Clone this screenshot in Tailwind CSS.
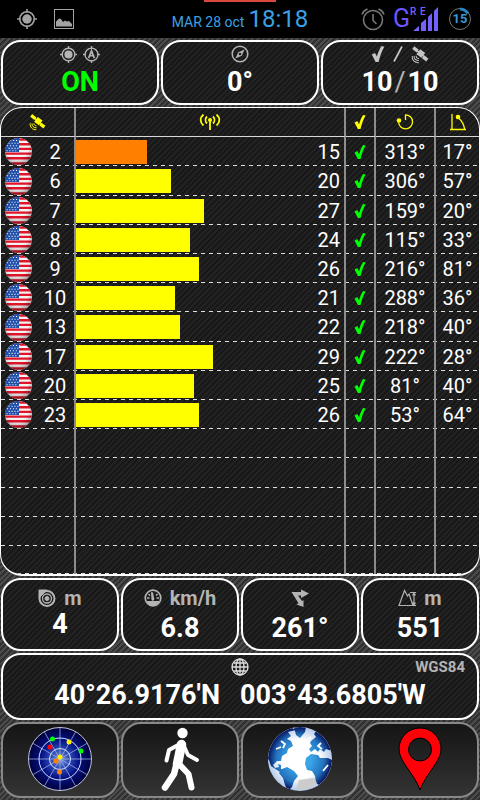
<!DOCTYPE html>
<html lang="en">
<head>
<meta charset="utf-8">
<meta name="viewport" content="width=device-width, initial-scale=1">
<title>GPS status</title>
<script src="https://cdn.jsdelivr.net/npm/@tailwindcss/browser@4"></script>
</head>
<body class="bg-black text-white font-[Roboto,'Liberation_Sans',sans-serif]">
<svg width="0" height="0" class="absolute" aria-hidden="true">
  <defs>
    <symbol id="fix" viewBox="0 0 20 20"><circle cx="10" cy="10" r="6.6" fill="none" stroke="currentColor" stroke-width="1.4"/><circle cx="10" cy="10" r="4.3" fill="currentColor"/><path d="M10 1v3M10 16v3M1 10h3M16 10h3" stroke="currentColor" stroke-width="1.5"/></symbol>
    <symbol id="agps" viewBox="0 0 20 20"><circle cx="10" cy="10" r="6.8" fill="none" stroke="currentColor" stroke-width="1.4"/><path d="M10 1v3M10 16v3M1 10h3M16 10h3" stroke="currentColor" stroke-width="1.5"/><path d="M7 13.8L10 6.2l3 7.600M8 11.300h4" fill="none" stroke="currentColor" stroke-width="1.8"/></symbol>
    <symbol id="check" viewBox="0 0 14 18"><path d="M.8 9.600L4 8L5.900 11.500C7.200 7 8.800 3.500 10.500 1L13.300 1.800C10.800 6 9 11.500 7.600 17H4.600Z" fill="currentColor"/></symbol>
    <symbol id="sat" viewBox="0 0 20 20"><g fill="currentColor"><path d="M3.500 1.200L1.400 4.200L6 7.800L8.200 4.900Z"/><path d="M13.700 10.800L11.400 13.700L16 17.300L18.300 14.200Z"/><path d="M9.700 4.500L15 8.300L11 13.500L5.700 9.700Z"/><path d="M5 4l11 9-1 1L4 5z"/></g><g fill="none" stroke="currentColor" stroke-width="1.1"><path d="M5.500 11.500c-.2 1.600 1 2.800 2.800 2.700"/><path d="M3.300 11.500c-.3 3 1.700 5 5 4.900"/><path d="M1.200 11.500c-.2 4.300 2.500 7.200 7 7.100"/></g></symbol>
    <clipPath id="disc"><circle cx="13" cy="13" r="13"/></clipPath>
    <radialGradient id="gloss" cx=".45" cy=".35" r=".7"><stop offset=".6" stop-color="#000" stop-opacity="0"/><stop offset="1" stop-color="#000" stop-opacity=".4"/></radialGradient>
    <symbol id="flag" viewBox="0 0 26 26"><g clip-path="url(#disc)"><path fill="#f4f1f1" d="M0 0h26v26H0z"/><path d="M0 1.500h26M0 6h26M0 10.500h26M0 15h26M0 19.500h26M0 24.500h26" stroke="#e0142a" stroke-width="2.300"/><path fill="#1f4fa8" d="M0 0h13.500v13.500H0z"/><path d="M5 2.500h9M3.500 5h10M2 7.500h11M3.500 10h10M1.500 12.200h11" stroke="#fff" stroke-width="1" stroke-dasharray="1 1.800"/><path fill="url(#gloss)" d="M0 0h26v26H0z"/></g></symbol>
  </defs>
</svg>

<div class="flex min-h-screen flex-col">
  <header class="relative grid h-[38px] grid-cols-[1fr_auto_1fr] items-center">
    <span class="absolute left-1/2 top-0 h-0.5 w-18 -translate-x-1/2 bg-[#d9473d]"></span>
    <div class="flex items-center gap-4 pl-4 text-[#a3a3a3]">
      <svg class="size-[22px]"><use href="#fix"/></svg>
      <svg class="size-5" viewBox="0 0 20 20"><rect x=".5" y=".5" width="19" height="19" fill="none" stroke="currentColor"/><path fill="currentColor" d="M2 17.500v-5l3-3 2 .5 2 3 2-1.500 2 1 2-.5 3 3v2.500z"/></svg>
    </div>
    <div class="flex items-baseline gap-1 text-[#3aa2e4]"><span class="text-[14px]">MAR 28 oct</span><time class="text-[24px] leading-8">18:18</time></div>
    <div class="flex items-center justify-end pr-2">
      <svg class="mr-2 size-6 text-[#777]" viewBox="0 0 24 24" fill="none" stroke="currentColor" stroke-width="1.6"><circle cx="12" cy="13" r="9.500"/><path d="M12 7v6.500l3.500 3.500M1 7.500C2 4.500 3.800 3 6.500 2M23 7.500C22 4.500 20.200 3 17.500 2"/></svg>
      <span class="text-[25px] leading-8 text-[#6b57ff]">G</span>
      <svg class="h-[26px] w-[30px] text-[#7561ff]" viewBox="0 0 30 26" fill="currentColor"><path d="M3 25l6-5v5zM11 25v-8l5-4v12zM18 25V11l4-4v18zM24 25V5l4-4v24z"/><text x="0" y="9" font-size="10" font-weight="500">R</text><text x="10" y="9" font-size="10" font-weight="500">E</text></svg>
      <span class="relative ml-2 flex size-6 items-center justify-center text-[13px] font-bold text-[#3a96d4]"><svg class="absolute inset-0 size-6" viewBox="0 0 24 24" fill="none"><circle cx="12" cy="12" r="10.500" stroke="#777" stroke-width="1"/><path d="M12 2a10 10 0 0 1 8 4.500" stroke="#2585c4" stroke-width="3"/></svg>15</span>
    </div>
  </header>

  <main class="flex flex-1 flex-col gap-0.5 bg-[repeating-linear-gradient(135deg,#303030_0_2px,#4b4b4b_2px_4px)] py-0.5">
    <section class="grid grid-cols-3 gap-0.5 px-px">
      <div class="flex h-[65px] flex-col items-center rounded-[20px] border-2 border-white bg-[repeating-linear-gradient(135deg,#181818_0_2px,#222222_2px_4px)] pt-0.5">
        <div class="flex h-5 items-center gap-1 text-[#b4b4b4]"><svg class="size-[19px]"><use href="#fix"/></svg><svg class="size-[19px]"><use href="#agps"/></svg></div>
        <div class="text-[27px] font-bold leading-9 text-[#00ff00]">ON</div>
      </div>
      <div class="flex h-[65px] flex-col items-center rounded-[20px] border-2 border-white bg-[repeating-linear-gradient(135deg,#181818_0_2px,#222222_2px_4px)] pt-0.5">
        <div class="flex h-5 items-center text-[#b4b4b4]"><svg class="size-[18px]" viewBox="0 0 18 18"><circle cx="9" cy="9" r="7.800" fill="none" stroke="currentColor" stroke-width="1.500"/><path d="M13.500 4.500L10.800 10.800L4.500 13.500L7.200 7.200Z" fill="currentColor"/><circle cx="9" cy="9" r="1.300" fill="#222"/></svg></div>
        <div class="text-[27px] font-bold leading-9">0°</div>
      </div>
      <div class="flex h-[65px] flex-col items-center rounded-[20px] border-2 border-white bg-[repeating-linear-gradient(135deg,#181818_0_2px,#222222_2px_4px)] pt-0.5">
        <div class="flex h-5 items-center gap-2 text-[#c4c4c4]"><svg class="h-[18px] w-3.5"><use href="#check"/></svg><svg class="h-4 w-2.5" viewBox="0 0 10 16"><path d="M1 15.500L9 .5" stroke="currentColor" stroke-width="1.700"/></svg><svg class="size-[19px]"><use href="#sat"/></svg></div>
        <div class="flex gap-0.5 text-[27px] font-bold leading-9"><span>10</span><span class="font-normal text-[#b4b4b4]">/</span><span>10</span></div>
      </div>
    </section>

    <section class="flex-1 overflow-hidden rounded-[22px] border border-b-2 border-white bg-[repeating-linear-gradient(135deg,#181818_0_2px,#222222_2px_4px)]">
      <table class="w-full table-fixed border-separate border-spacing-0 text-center text-[20px] leading-6">
        <colgroup><col class="w-[75px]"><col><col class="w-[30px]"><col class="w-[60px]"><col class="w-[43px]"></colgroup>
        <thead>
          <tr class="h-[29px] text-[#ffff00]">
            <th class="border-r-2 border-b border-r-[#8c8c8c] border-b-[#d8d8d8] p-0" aria-label="Satellite"><svg class="mx-auto size-[18px]"><use href="#sat"/></svg></th>
            <th class="border-r-2 border-b border-r-[#8c8c8c] border-b-[#d8d8d8] p-0" aria-label="Signal"><svg class="mx-auto h-4 w-[22px]" viewBox="0 0 22 16" fill="none" stroke="currentColor" stroke-width="1.800"><circle cx="11" cy="6" r="2" fill="currentColor" stroke="none"/><path d="M11 7v9M8 2.500c-2 2-2 5 0 7M14 2.500c2 2 2 5 0 7M4.500 .5c-3.800 3.300-3.800 7.700 0 11M17.500 .5c3.800 3.300 3.800 7.700 0 11"/></svg></th>
            <th class="border-r-2 border-b border-r-[#8c8c8c] border-b-[#d8d8d8] p-0" aria-label="Used"><svg class="mx-auto h-4 w-3.5"><use href="#check"/></svg></th>
            <th class="border-r-2 border-b border-r-[#8c8c8c] border-b-[#d8d8d8] p-0" aria-label="Azimuth"><svg class="mx-auto size-[18px]" viewBox="0 0 18 18" fill="none" stroke="currentColor" stroke-width="1.300"><path d="M9.500 7V1.800A7 7 0 1 1 2.600 9.500"/><circle cx="3" cy="7.500" r="2.300" fill="currentColor" stroke="none"/></svg></th>
            <th class="border-b border-b-[#d8d8d8] p-0" aria-label="Elevation"><svg class="mx-auto size-[18px]" viewBox="0 0 18 18" fill="none" stroke="currentColor" stroke-width="1.300"><path d="M3 1v15.500M1 16.500h16M9.500 5C13 8 15 11.500 15.500 16"/><circle cx="9" cy="4" r="2.300" fill="currentColor" stroke="none"/></svg></th>
          </tr>
        </thead>
        <tbody id="satellites"></tbody>
      </table>
    </section>

    <section class="grid grid-cols-4 gap-0.5 px-px">
      <div class="flex h-[73px] flex-col items-center rounded-[20px] border-2 border-white bg-[repeating-linear-gradient(135deg,#181818_0_2px,#222222_2px_4px)] pt-1.5">
        <div class="flex h-6 items-center gap-2 text-[20px] font-bold leading-6 text-[#b4b4b4]"><svg class="size-[18px]" viewBox="0 0 18 18" fill="none" stroke="currentColor"><path d="M1 1h8L1 9z" fill="currentColor"/><circle cx="9" cy="9.500" r="7.500" stroke-width="2"/><circle cx="9" cy="9.500" r="4.500" stroke-width="1.300"/><circle cx="9" cy="9.500" r="2" fill="currentColor"/></svg>m</div>
        <div class="text-[27px] font-bold leading-7">4</div>
      </div>
      <div class="flex h-[73px] flex-col items-center rounded-[20px] border-2 border-white bg-[repeating-linear-gradient(135deg,#181818_0_2px,#222222_2px_4px)] pt-1.5">
        <div class="flex h-6 items-center gap-2 text-[20px] font-bold leading-6 text-[#b4b4b4]"><svg class="size-[18px]" viewBox="0 0 18 18"><circle cx="9" cy="9" r="7.800" fill="none" stroke="currentColor" stroke-width="1.700"/><path d="M2 12h14l-3.500 4.500h-7zM7 3l2 .5 1.300 7a1.500 1.500 0 0 1-2.800.3z" fill="currentColor"/><path d="M3 9h2.500M12.500 9H15M4.500 5l1.500 1.500M13.500 5L12 6.500" stroke="currentColor" stroke-width="1.500"/></svg>km/h</div>
        <div class="text-[27px] font-bold leading-9">6.8</div>
      </div>
      <div class="flex h-[73px] flex-col items-center rounded-[20px] border-2 border-white bg-[repeating-linear-gradient(135deg,#181818_0_2px,#222222_2px_4px)] pt-1.5">
        <div class="flex h-6 items-center text-[#b4b4b4]"><svg class="size-[18px]" viewBox="0 0 18 18" fill="currentColor"><path d="M.5 3H10V.5L18 4.500L10 9V6.500H7l4 5.500 1.500-1v7L5.500 15.500 7.500 14.300z"/></svg></div>
        <div class="text-[27px] font-bold leading-9">261°</div>
      </div>
      <div class="flex h-[73px] flex-col items-center rounded-[20px] border-2 border-white bg-[repeating-linear-gradient(135deg,#181818_0_2px,#222222_2px_4px)] pt-1.5">
        <div class="flex h-6 items-center gap-2 text-[20px] font-bold leading-6 text-[#b4b4b4]"><svg class="size-[18px]" viewBox="0 0 18 18" fill="none" stroke="currentColor" stroke-width="1.200"><path d="M1 16.500L6.500 1.500l3 5.500 1.500-2L15 16.500zM12 3.500h6M13 16.500h5M16 4v12M14.500 6.500L16 4l1.500 2.500M14.500 13.500L16 16l1.500-2.500"/></svg>m</div>
        <div class="text-[27px] font-bold leading-9">551</div>
      </div>
    </section>

    <section class="mx-px flex h-[67px] flex-col rounded-[20px] border-2 border-white bg-[repeating-linear-gradient(135deg,#181818_0_2px,#222222_2px_4px)] pt-0.5">
      <div class="grid h-5 grid-cols-[1fr_auto_1fr] items-center">
        <svg class="col-start-2 size-[18px]" viewBox="0 0 18 18" fill="none" stroke="#ddd" stroke-width="1.300"><circle cx="9" cy="9" r="8"/><ellipse cx="9" cy="9" rx="4" ry="8"/><path d="M9 1v16M1 9h16M2.500 5h13M2.500 13h13"/></svg>
        <span class="pr-3 text-right text-[15px] font-bold leading-5 text-[#b4b4b4]">WGS84</span>
      </div>
      <div class="flex justify-center gap-5 text-[27px] font-bold leading-9"><span>40°26.9176'N</span><span>003°43.6805'W</span></div>
    </section>

    <nav class="grid grid-cols-4 gap-0.5 px-px">
      <button type="button" aria-label="Satellite radar" class="flex h-[76px] items-center justify-center rounded-[20px] border-2 border-[#888] bg-linear-to-b from-[#151515] to-[#343434] pb-0.5">
        <svg class="size-16" viewBox="0 0 64 64"><defs><radialGradient id="radar"><stop offset="0" stop-color="#8ba4df"/><stop offset=".25" stop-color="#3454ba"/><stop offset=".6" stop-color="#051388"/><stop offset="1" stop-color="#000038"/></radialGradient></defs><circle cx="32" cy="32" r="31.500" fill="url(#radar)" stroke="#bcc3df" stroke-width="1"/><path d="M32 1v62M1 32h62M16.500 5.200l31 53.600M47.500 5.200l-31 53.600M5.200 16.500l53.600 31M5.200 47.500l53.600-31" stroke="#9baae0" stroke-width=".8"/><g fill="none" stroke="#d4dcf8"><circle cx="32" cy="32" r="21"/><circle cx="32" cy="32" r="10.500"/></g><g fill="#0f0"><circle cx="24.500" cy="12" r="2.500"/><circle cx="53" cy="24" r="2.500"/></g><circle cx="22" cy="20" r="2.500" fill="#f00"/><g fill="#fff000"><circle cx="41" cy="15" r="2.500"/><circle cx="32" cy="30" r="2.500"/></g><g fill="#ff8000"><circle cx="28" cy="34" r="2.500"/><circle cx="31.500" cy="45" r="2.500"/></g></svg>
      </button>
      <button type="button" aria-label="Walking" class="flex h-[76px] items-center justify-center rounded-[20px] border-2 border-[#888] bg-linear-to-b from-[#151515] to-[#343434] pb-0.5">
        <svg class="h-16 w-[38px]" viewBox="0 0 38 64"><circle cx="21.500" cy="6" r="5.200" fill="#fff"/><g fill="none" stroke="#fff" stroke-linecap="round" stroke-linejoin="round"><path d="M19 17L8 23L5.500 33.500" stroke-width="4"/><path d="M23 19L27 28L36 33" stroke-width="3.800"/><path d="M20.500 17.500L16.500 37" stroke-width="9.500"/><path d="M15.500 37L13 47L4 60.500" stroke-width="6.500"/><path d="M18 37L27.500 47L30.500 60.500" stroke-width="6"/></g></svg>
      </button>
      <button type="button" aria-label="World" class="flex h-[76px] items-center justify-center rounded-[20px] border-2 border-[#888] bg-linear-to-b from-[#151515] to-[#343434] pb-0.5">
        <svg class="size-16" viewBox="0 0 64 64"><defs><clipPath id="world"><circle cx="32" cy="32" r="32"/></clipPath><radialGradient id="sea"><stop offset=".6" stop-color="#fff"/><stop offset="1" stop-color="#b5cbea"/></radialGradient><radialGradient id="land"><stop offset=".35" stop-color="#3aa5e6"/><stop offset=".75" stop-color="#2372bd"/><stop offset="1" stop-color="#05135e"/></radialGradient></defs><g clip-path="url(#world)"><path fill="url(#sea)" d="M0 0h64v64H0z"/><clipPath id="continents"><path d="M0 32V14L10 3l12-3 6 3-8 2 3 4-4 3 4 2 2 5-5 3-1 4-5 3-1 5-4 0-4 4 2 3 4-1-1-3 3 1 0 4 5 2-6 1-9-6-2-6zM26 0h12l-1 5-5 6-4-3zM14 42l5-2 7 4 4 5-4 5-2 6-4 4-3-6-2-7-4-5zM43 14l5-4-2-3 3-4 15 12v9l-6-2-2 3-4-3-2 3-3-3-4 3-2-3 3-3-2-3zM38 31l5-4 7 1 2 3 8 0 4 2v15L51 58l-3-2-1-7-3-5-5-1-2-6z"/></clipPath><g clip-path="url(#continents)"><circle cx="32" cy="32" r="32" fill="url(#land)"/></g><path d="M13 14l4 3-2 4M8 22l5-2M53 16l-3 3 4 3M46 25l5 1M60 38l-5 6M41 12l2-2" fill="none" stroke="#fff" stroke-width="1.800"/><path d="M31 53l15-2 3 5-9 6-12 0z" fill="#ccc"/></g></svg>
      </button>
      <button type="button" aria-label="Map location" class="flex h-[76px] items-center justify-center rounded-[20px] border-2 border-[#888] bg-linear-to-b from-[#151515] to-[#343434] pb-0.5">
        <svg class="h-16 w-11" viewBox="0 0 44 64"><path fill="#ff0008" stroke="#000" fill-rule="evenodd" d="M22 1A21 21 0 0 0 1 22C1 35 16 46 22 63C28 46 43 35 43 22A21 21 0 0 0 22 1ZM22 11a11.500 11.500 0 1 1 0 23a11.500 11.500 0 1 1 0-23Z"/></svg>
      </button>
    </nav>
  </main>
</div>

<script>
  const satellites = [
    [2, 15, 313, 17], [6, 20, 306, 57], [7, 27, 159, 20], [8, 24, 115, 33], [9, 26, 216, 81],
    [10, 21, 288, 36], [13, 22, 218, 40], [17, 29, 222, 28], [20, 25, 81, 40], [23, 26, 53, 64],
    null, null, null, null, null
  ];
  const row = 'h-[29px] nth-[5n+2]:h-[30px] last:h-7 bg-[repeating-linear-gradient(90deg,#dedede_0_4px,transparent_4px_8px)] bg-[length:100%_1px] bg-bottom bg-no-repeat';
  const cell = 'border-r-2 border-[#8c8c8c] p-0';
  document.getElementById('satellites').innerHTML = satellites.map(s => {
    if (!s) return `<tr class="${row}"><td class="${cell}"></td><td class="${cell}"></td><td class="${cell}"></td><td class="${cell}"></td><td class="p-0"></td></tr>`;
    const [id, snr, azimuth, elevation] = s;
    const color = snr < 20 ? 'bg-[#ff8000]' : 'bg-[#ffff00]';
    return `<tr class="${row}">
      <td class="${cell}"><div class="flex items-center pl-1"><svg class="size-[27px]" role="img" aria-label="USA"><use href="#flag"/></svg><span class="flex-1 pl-1">${id}</span></div></td>
      <td class="${cell}"><div class="flex items-center justify-between pr-1"><div class="h-6 flex-1"><div class="h-6 ${color}" style="width:${snr / 51 * 100}%"></div></div><span>${snr}</span></div></td>
      <td class="${cell}"><svg class="mx-auto h-4 w-3.5 text-[#00ff00]" role="img" aria-label="Used"><use href="#check"/></svg></td>
      <td class="${cell}">${azimuth}°</td>
      <td class="p-0">${elevation}°</td></tr>`;
  }).join('');
</script>
</body>
</html>
